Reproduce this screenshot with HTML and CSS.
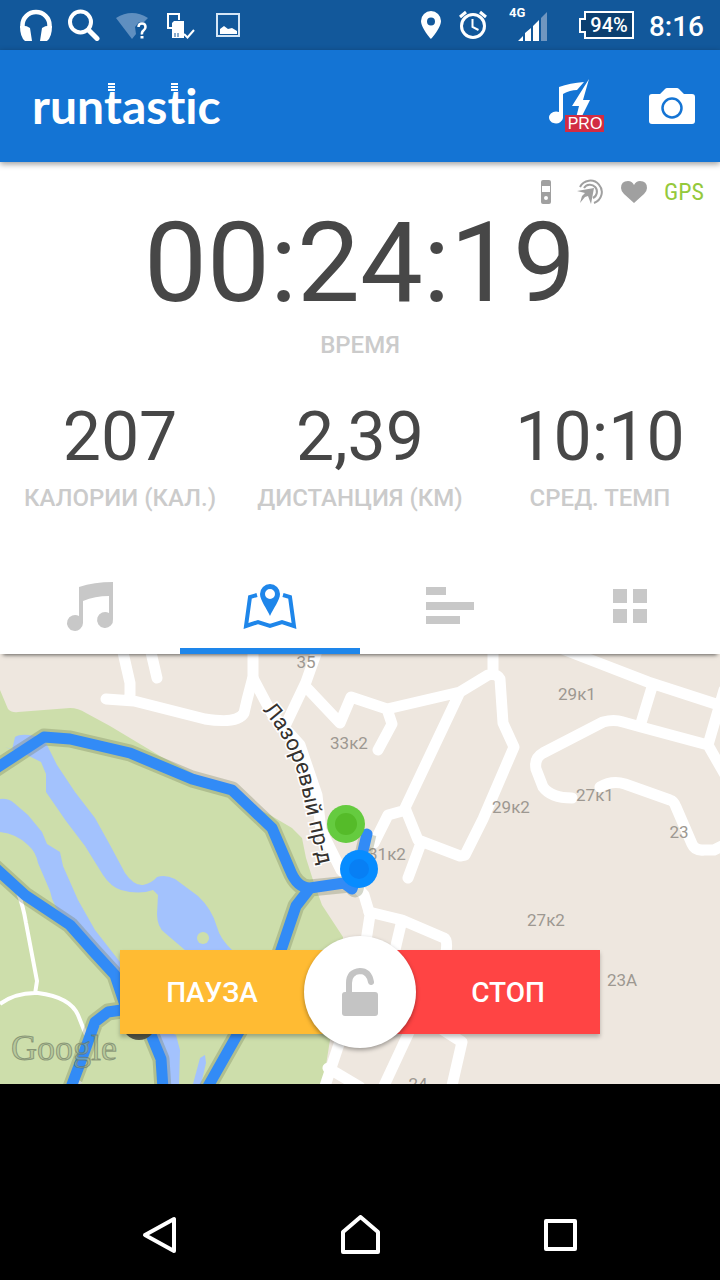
FILE: index.html
```html
<!DOCTYPE html>
<html lang="ru">
<head>
<meta charset="utf-8">
<meta name="viewport" content="width=device-width, initial-scale=1">
<title>Runtastic</title>
<link rel="stylesheet" href="styles.css">
</head>
<body>
<div class="status">
  <div class="status-group">
    <svg class="status-icon" viewBox="0 0 32 32" aria-hidden="true"><path d="M2.500 19V16A13.500 13 0 0 1 29.500 16V19" fill="none" stroke="#fff" stroke-width="4.500"/><path d="M0 17q6-1 10 2l2 13H5q-5-4-5-15z M32 17q-6-1-10 2l-2 13h7q5-4 5-15z" fill="#fff"/></svg>
    <svg class="status-icon" viewBox="0 0 32 32" aria-hidden="true"><circle cx="12.500" cy="13" r="10.500" fill="none" stroke="#fff" stroke-width="4"/><path d="M20.500 21l8.500 8.500" stroke="#fff" stroke-width="5" stroke-linecap="round"/></svg>
    <svg class="status-icon" viewBox="0 0 32 32" aria-hidden="true"><path d="M0 9Q16-1 32 9l-4 4h-5l-4 5 1 7-4 5z" fill="#5f8fc0"/><path d="M22.500 18q0-3.500 3.500-3.500t3.500 3.500q0 2-2 3.500t-1.500 4" fill="none" stroke="#fff" stroke-width="2.500"/><path d="M24.500 27h3v2.500h-3z" fill="#fff"/></svg>
    <svg class="status-icon" viewBox="0 0 32 32" aria-hidden="true"><path d="M8 19H4V5h11v6" fill="none" stroke="#fff" stroke-width="2"/><path d="M8 14l2-2h10v17H8z" fill="#fff"/><path d="M11 24v4m3-4v4" stroke="#12589b"/><path d="M20 25l3.500 3.500L30 21" fill="none" stroke="#fff" stroke-width="2"/></svg>
    <svg class="status-icon" viewBox="0 0 32 32" aria-hidden="true"><path d="M5 5h22v22H5z" fill="none" stroke="#d5e6f6" stroke-width="2"/><path d="M8 25v-5l4-3 4 3 4-1 5 3v3z" fill="#fff"/></svg>
  </div>
  <div class="status-group status-right">
    <svg class="status-icon" viewBox="0 0 32 32" aria-hidden="true"><path fill-rule="evenodd" d="M16 2a10 10 0 0 0-10 10c0 7 10 18 10 18s10-11 10-18A10 10 0 0 0 16 2zm0 6.500a4 4 0 1 1 0 8 4 4 0 0 1 0-8z" fill="#fff"/></svg>
    <svg class="status-icon" viewBox="0 0 32 32" aria-hidden="true"><circle cx="16" cy="17" r="11.500" fill="none" stroke="#fff" stroke-width="3"/><path d="M3 8l6-5m20 5l-6-5" stroke="#fff" stroke-width="3"/><path d="M15.500 10v8l6 3" fill="none" stroke="#fff" stroke-width="2"/></svg>
    <svg class="signal" viewBox="0 0 40 40" aria-label="4G"><text x="0" y="12" class="signal-label">4G</text><path d="M9 36l5-5v5zM16 28l6-5v13h-6zM24 21l6-6v21h-6z" fill="#fff"/><path d="M32 13l6-6v29h-6z" fill="#7096c0"/></svg>
    <svg class="battery" viewBox="0 0 56 30" aria-label="94%"><path d="M7 2h48v26H7v-6H2V9h5z" fill="#0b3f70" stroke="#fff" stroke-width="2"/><text x="31" y="22" class="battery-label">94%</text></svg>
    <span class="clock">8:16</span>
  </div>
</div>

<header class="appbar">
  <h1 class="logo">run<span class="tee">t</span>as<span class="tee">t</span>ic</h1>
  <div class="actions">
    <button type="button" class="action" aria-label="Музыка PRO"><svg width="58" height="56" viewBox="0 0 58 56"><path d="M11 9q11-4 25-5l-7 8q-7 0-14 4v24a7 6 0 1 1-4-6z" fill="#fff"/><path d="M41 1L24 28h7l-3 12h5l9-18h-7z" fill="#fff"/><path d="M17 37h39v17H17z" fill="#d22c43"/><text x="37" y="51" class="pro">PRO</text></svg></button>
    <button type="button" class="action" aria-label="Камера"><svg width="48" height="40" viewBox="0 0 48 40"><path d="M4 8h8l5-5q1-1 2-1h10q1 0 2 1l5 5h8q3 0 3 3v24q0 3-3 3H4q-3 0-3-3V11q0-3 3-3z" fill="#fff"/><circle cx="24" cy="22" r="9.500" fill="#fff" stroke="#1474d4" stroke-width="2.500"/></svg></button>
  </div>
</header>

<main class="main">
  <section class="stats">
    <div class="sensors">
      <svg width="28" height="28" viewBox="0 0 28 28" aria-hidden="true"><path fill-rule="evenodd" d="M11 2h6q2 0 2 2v20q0 2-2 2h-6q-2 0-2-2V4q0-2 2-2zm-1 6v6h8V8zm4 10a2 2 0 1 0 0 4 2 2 0 0 0 0-4z" fill="#a0a0a0"/></svg>
      <svg width="28" height="28" viewBox="0 0 28 28" aria-hidden="true"><g fill="none" stroke="#a0a0a0" stroke-width="2"><path d="M4 9a11.500 11.500 0 1 1 14 16"/><path d="M8 10a7 7 0 1 1 9 10"/></g><path d="M18 10l-3 16-3-8-3 1-5 6 2-7 3-3-8-2z" fill="#a0a0a0"/></svg>
      <svg width="28" height="28" viewBox="0 0 28 28" aria-hidden="true"><path d="M14 25L4 16Q1 13 1 10 1 3 8 3q4 0 6 4 2-4 6-4 7 0 7 7 0 3-3 6z" fill="#a0a0a0"/></svg>
      <span class="gps">GPS</span>
    </div>
    <div class="time">00:24:19</div>
    <div class="label">ВРЕМЯ</div>
    <div class="metrics">
      <div class="metric"><div class="value">207</div><div class="label">КАЛОРИИ (КАЛ.)</div></div>
      <div class="metric"><div class="value">2,39</div><div class="label">ДИСТАНЦИЯ (КМ)</div></div>
      <div class="metric"><div class="value">10:10</div><div class="label">СРЕД. ТЕМП</div></div>
    </div>
  </section>

  <nav class="tabs">
    <button type="button" class="tab" aria-label="Музыка"><svg width="56" height="56" viewBox="0 0 56 56"><path d="M17 9q15-5 34-5v37a8 8 0 1 1-4-6V18q-14 0-26 5v22a8 8 0 1 1-4-7z" fill="#c8c8c8"/></svg></button>
    <button type="button" class="tab tab-active" aria-label="Карта"><svg width="56" height="56" viewBox="0 0 56 56"><path d="M15 17l-7 2-4 29 12-4 12 4 12-4 12 4-4-29-7-2" fill="none" stroke="#1e86ea" stroke-width="4"/><path fill-rule="evenodd" d="M28 6a10 10 0 0 0-10 10c0 6 7 15 10 22 3-7 10-16 10-22A10 10 0 0 0 28 6zm0 5a5 5 0 1 1 0 10 5 5 0 0 1 0-10z" fill="#1e86ea"/></svg></button>
    <button type="button" class="tab" aria-label="Статистика"><svg width="56" height="56" viewBox="0 0 56 56"><path d="M4 9h20v8H4zM4 24h48v8H4zM4 38h34v8H4z" fill="#c8c8c8"/></svg></button>
    <button type="button" class="tab" aria-label="Ещё"><svg width="56" height="56" viewBox="0 0 56 56"><path d="M11 11h14v14H11zM31 11h14v14H31zM11 31h14v14H11zM31 31h14v14H31z" fill="#c8c8c8"/></svg></button>
  </nav>

  <section class="map" aria-label="Карта">
    <svg class="map-art" viewBox="0 654 720 430" preserveAspectRatio="xMidYMid slice">
      <path d="M0 650h720v440H0z" fill="#eee7df"/>
      <path d="M0 690L8 709Q12 713 18 712L70 708Q78 708 86 713L110 726 160 756 200 777 240 800 270 815 292 828 302 838 306 858 313 880 322 905 343 937V990L330 1040 322 1090H0z" fill="#cddeab"/>
      <g fill="#a3c2fd">
        <path d="M12 750l3-13q6-4 20-1l10 5 12 24 18 27 20 26 15 27 15 28q9 13 18 12 9-2 14-8 8-3 18 2l23 17q14 13 19 31 3 12 16 24v14h-30l-18-15-20-17q-8-6-8-19l1-19-5-5q-14 5-32 0-10-3-18-15l-18-29-19-25-20-29v-18l-5-12-16-8-20-7z"/>
        <path d="M0 799q8-1 14 4l14 12 14 17 5 12 13 8 3 14 15 34 17 30 25 32 30 62 26 11 4 15-1 34h-18v-24l-24-44-20-42-20-18-30-36q-14-12-17-29l-12-28q-2-11-10-18-11-11-28-13z"/>
        <path d="M193 1084l7-26 5-3 1 8-5 21z"/>
      </g>
      <circle cx="203" cy="938" r="6" fill="#cddeab"/>
      <g fill="none" stroke="#fff" stroke-width="4">
        <path d="M18 893q5 12 8 30l11 58-2 13M0 1004q16-12 38-11 32 4 40 22l8 20M81 1084l-6-5"/>
      </g>
      <g fill="none" stroke="#fff" stroke-width="11" stroke-linecap="round" stroke-linejoin="round">
        <path d="M122 648l8 35v15M150 648l7 30M106 699l28 2 71 18q33 5 39-6l3-13 6-23v-30"/>
        <path d="M253 678l19 36 28 31 17 50 4 35 20 40 23 25 6 20-6 39M318 648l-12 34-20 42M306 687l34 36 11-26 36 12 73-17 28-17q9-2 12 4l3 44 11 24-31 72-18 36-5 1-42-16-13-32 54-114M387 709l5 15-14 26M406 810l-18 5-14 28M421 843l-13 35M493 648v26"/>
        <path d="M560 648l88 34 80 26M652 687l-11 36M724 690l-16 55 20 35M708 745l-67-18-18-5q-9-3-20 0l-60 31q-9 5-7 16l7 18q8 11 29 11M600 787q12-7 25-3l45 16q4 1 6 7l16 37q3 7 12 6h10l10-5"/>
        <path d="M369 912l33 8 42 18q4 2 2 14M402 920l-8 34M342 1035l-18 54M328 1068l32 19M410 1030l-28 60M440 1028l22 14-11 48"/>
      </g>
      <g class="map-labels">
        <text x="306" y="668">35</text><text x="349" y="749">33к2</text><text x="577" y="700">29к1</text><text x="595" y="801">27к1</text><text x="511" y="813">29к2</text><text x="679" y="838">23</text><text x="387" y="860">31к2</text><text x="546" y="926">27к2</text><text x="622" y="986">23А</text><text x="418" y="1090">24</text>
      </g>
      <path id="street" d="M262 710Q292 743 302 790T320 870" fill="none"/>
      <text class="street"><textPath href="#street">Лазоревый пр-д</textPath></text>
      <g fill="none" stroke-linejoin="round">
        <g stroke="#6e7850" stroke-opacity=".3" stroke-width="17"><path d="M-8 771l52-34 26 2 60 14 62 26 40 11 40 38 18 42q7 18 20 18l40-4 5 5 4-17 9-38M310 888l-14 18-21 62-69 122M-8 865l33 30 45 30 23 26 22 24 10 30 22 20 14 34 2 30M70 1090l15-40 10-28 13-10 20-3"/></g>
        <g stroke="#328bf6" stroke-width="11" stroke-linecap="round"><path d="M-8 771l52-34 26 2 60 14 62 26 40 11 40 38 18 42q7 18 20 18l34-5 8 6 6-17 9-38M310 888l-14 18-21 62-69 122M-8 865l33 30 45 30 23 26 22 24 10 30 22 20 14 34 2 30M70 1090l15-40 10-28 13-10 20-3"/></g>
      </g>
      <circle cx="139" cy="1023" r="17" fill="#55594b"/>
      <circle cx="346" cy="824" r="19" fill="#65cb3f"/><circle cx="346" cy="824" r="11" fill="#55bb29"/>
      <circle cx="359" cy="869" r="19" fill="#078cff"/><circle cx="359" cy="869" r="10" fill="#087ff4"/>
      <text x="11" y="1060" class="google">Google</text>
    </svg>
    <div class="controls">
      <button type="button" class="control pause">ПАУЗА</button>
      <button type="button" class="control stop">СТОП</button>
      <button type="button" class="lock" aria-label="Блокировка"><svg width="40" height="52" viewBox="0 0 40 52"><path d="M9 30V17q0-11 11-12 9 0 11 11" fill="none" stroke="#c4c4c4" stroke-width="6" stroke-linecap="round"/><rect x="2" y="26" width="36" height="24" rx="3" fill="#c4c4c4"/></svg></button>
    </div>
  </section>
</main>

<nav class="system">
  <button type="button" class="sys" aria-label="Назад"><svg width="40" height="40" viewBox="0 0 40 40"><path d="M34 4v32L5 20z"/></svg></button>
  <button type="button" class="sys" aria-label="Домой"><svg width="40" height="40" viewBox="0 0 40 40"><path d="M20.500 2L38 17v20H3V17z"/></svg></button>
  <button type="button" class="sys" aria-label="Недавние"><svg width="40" height="40" viewBox="0 0 40 40"><path d="M6 6h29v28H6z"/></svg></button>
</nav>
</body>
</html>
```
FILE: styles.css
```css
* { box-sizing: border-box; }
body {
  margin: 0;
  min-height: 100vh;
  display: flex;
  flex-direction: column;
  background: #000;
  font-family: Roboto, "Noto Sans", sans-serif;
}
button {
  border: 0;
  padding: 0;
  background: none;
  font: inherit;
  color: inherit;
  display: flex;
  align-items: center;
  justify-content: center;
}
svg { display: block; }

.status {
  height: 50px;
  padding: 0 16px 0 20px;
  display: flex;
  align-items: center;
  justify-content: space-between;
  background: #12589b;
  color: #fff;
}
.status-group { display: flex; align-items: center; gap: 16px; }
.status-right { gap: 10px; }
.status-icon { width: 32px; height: 32px; }
.signal { width: 40px; height: 40px; margin-left: 10px; }
.signal-label { font-size: 13px; font-weight: 700; fill: #fff; }
.battery { width: 56px; height: 30px; margin-left: 19px; }
.battery-label { font-size: 20px; font-weight: 500; fill: #fff; text-anchor: middle; }
.clock { padding-top: 3px; margin-left: 5px; font-size: 28px; line-height: 32px; font-weight: 500; }

.appbar {
  position: relative;
  z-index: 1;
  height: 112px;
  padding: 0 24px 0 32px;
  display: flex;
  align-items: center;
  justify-content: space-between;
  background: #1474d4;
  color: #fff;
  box-shadow: 0 2px 6px rgba(0, 0, 0, .4);
}
.logo { margin: 0; font: 700 48px/48px Lato, sans-serif; font-variant-ligatures: none; }
.tee { position: relative; }
.tee::before {
  content: "";
  position: absolute;
  left: 4px;
  top: 6px;
  width: 7px;
  height: 9px;
  background: repeating-linear-gradient(#fff 0 2px, #1474d4 2px 3px);
}
.actions { display: flex; align-items: center; gap: 42px; }
.pro { font: 16px "Liberation Sans", sans-serif; fill: #fff; text-anchor: middle; }

.main { flex: 1; display: flex; flex-direction: column; background: #fff; }
.stats { padding-top: 14px; padding-bottom: 44px; }
.sensors {
  height: 32px;
  padding-right: 16px;
  display: flex;
  align-items: center;
  justify-content: flex-end;
  gap: 16px;
}
.gps { font: 24px/32px "Roboto Condensed", Roboto, sans-serif; color: #95c93c; }
.time { font-size: 112px; line-height: 110px; text-align: center; color: #474747; }
.label {
  margin-top: 11px;
  font-size: 24px;
  line-height: 32px;
  font-weight: 500;
  text-align: center;
  white-space: nowrap;
  color: #cbcbcb;
}
.metrics { margin-top: 42px; display: grid; grid-template-columns: repeat(3, 1fr); }
.value { font-size: 68px; line-height: 68px; text-align: center; color: #474747; }

.tabs {
  position: relative;
  z-index: 1;
  display: grid;
  grid-template-columns: repeat(4, 1fr);
  height: 96px;
  background: #fff;
  box-shadow: 0 4px 4px -3px rgba(0, 0, 0, .6);
}
.tab-active { box-shadow: inset 0 -6px #1e86ea; }

.map { position: relative; flex: 1 0 360px; overflow: hidden; }
.map-art { position: absolute; width: 100%; height: 100%; }
.map-labels { font-size: 17px; fill: #9d9891; text-anchor: middle; }
.street { font-size: 22px; fill: #35322f; stroke: #fff; stroke-width: 3px; paint-order: stroke; }
.google {
  font: 36px "Liberation Serif", serif;
  fill: #a3b38b;
  fill-opacity: .5;
  stroke: #64705b;
  stroke-opacity: .6;
}
.controls {
  position: absolute;
  left: 0;
  right: 0;
  bottom: 50px;
  width: 67%;
  max-width: 480px;
  min-width: 320px;
  height: 84px;
  margin: 0 auto;
  display: grid;
  grid-template-columns: 1fr 1fr;
  color: #fff;
  font-size: 28px;
  font-weight: 500;
  box-shadow: 0 3px 4px rgba(0, 0, 0, .25);
}
.pause { background: #ffbb33; padding-right: 56px; }
.stop { background: #ff4444; padding-left: 56px; }
.lock {
  position: absolute;
  left: 50%;
  top: 50%;
  width: 112px;
  height: 112px;
  transform: translate(-50%, -50%);
  border-radius: 50%;
  background: #fff;
  box-shadow: 0 2px 4px rgba(0, 0, 0, .35);
}

.system {
  padding: 131px 60px 25px;
  display: grid;
  grid-template-columns: repeat(3, 1fr);
  background: #000;
}
.sys path { fill: none; stroke: #fff; stroke-width: 4; stroke-linejoin: round; }
```
